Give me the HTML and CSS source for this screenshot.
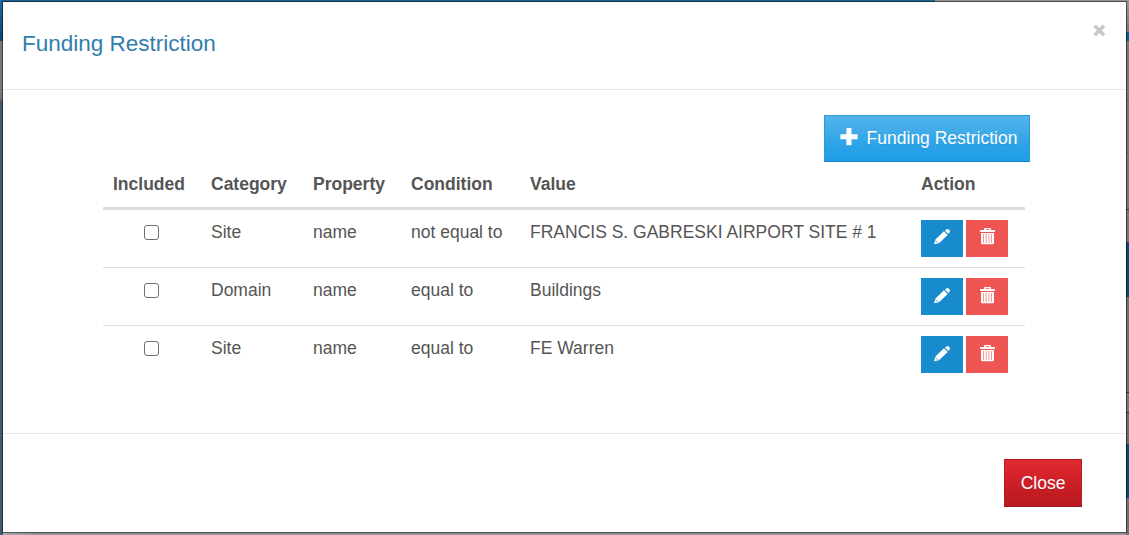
FILE: index.html
```
<!DOCTYPE html>
<html lang="en">
<head>
<meta charset="utf-8">
<title>Funding Restriction</title>
<link rel="stylesheet" href="styles.css">
</head>
<body>
<svg class="symbols" width="0" height="0">
  <symbol id="pencil" viewBox="0 0 18 18"><path fill="#fff" d="M1 16.2 2.4 11.5 10.9 3.3 14.7 7 6 15.2zM11.9 2.7 13.4 1.5Q14.6 .6 15.7 1.6L16.7 2.6Q17.4 3.5 16.6 4.5L15.5 6z"/><path d="M2.6 12.4 5.2 15" stroke="#188bcd" stroke-width=".7"/></symbol>
  <symbol id="trash" viewBox="0 0 15 17"><path fill="#fff" fill-rule="evenodd" d="M4 2V1Q4 0 5 0H10Q11 0 11 1V2H14Q15 2 15 3V4H0V3Q0 2 1 2zM5.7 1.2V2H9.3V1.2zM1 5H14V15Q14 16.3 12.7 16.3H2.3Q1 16.3 1 15z"/><path d="M3.5 6V15M6.2 6V15M8.9 6V15M11.5 6V15" stroke="#ef5552" stroke-opacity=".75" stroke-width=".8"/></symbol>
</svg>
<div class="backdrop">
  <div class="edge-left"><i class="blue"></i><i class="gray"></i><i class="slate"></i></div>
  <div class="edge-middle"><i class="top"></i><i class="bottom"></i></div>
  <div class="edge-right"><i class="g1"></i><i class="b1"></i><i class="g2"></i><i class="b2"></i><i class="g3"></i><i class="b3"></i><i class="g4"></i></div>
</div>
<main class="modal">
  <header class="modal-header">
    <h4 class="title">Funding Restriction</h4>
    <button class="dismiss" aria-label="Close"><svg width="13" height="13" viewBox="0 0 13 13"><path d="M1.6 1.8 11 11.2M11 1.8 1.6 11.2" stroke="#c8c8c8" stroke-width="3.7"/></svg></button>
  </header>
  <section class="modal-body">
    <div class="toolbar">
      <button class="btn btn-add"><svg class="plus" width="18" height="18" viewBox="0 0 18 18"><path fill="#fff" d="M7 0H11Q11.5 0 11.5 .5V6.2H17Q17.6 6.2 17.6 6.8V10.8Q17.6 11.3 17 11.3H11.5V16.6Q11.5 17.2 11 17.2H7Q6.4 17.2 6.4 16.6V11.3H1Q.4 11.3 .4 10.8V6.8Q.4 6.2 1 6.2H6.4V.5Q6.4 0 7 0z"/></svg><span>Funding Restriction</span></button>
    </div>
    <table class="grid">
      <colgroup><col class="c1"><col class="c2"><col class="c3"><col class="c4"><col class="c5"><col class="c6"></colgroup>
      <thead><tr><th>Included</th><th>Category</th><th>Property</th><th>Condition</th><th>Value</th><th>Action</th></tr></thead>
      <tbody>
        <tr><td><span class="check"></span></td><td>Site</td><td>name</td><td>not equal to</td><td>FRANCIS S. GABRESKI AIRPORT SITE # 1</td><td><div class="actions"><button class="act edit"><svg width="18" height="18"><use href="#pencil"/></svg></button><button class="act del"><svg width="15" height="17"><use href="#trash"/></svg></button></div></td></tr>
        <tr><td><span class="check"></span></td><td>Domain</td><td>name</td><td>equal to</td><td>Buildings</td><td><div class="actions"><button class="act edit"><svg width="18" height="18"><use href="#pencil"/></svg></button><button class="act del"><svg width="15" height="17"><use href="#trash"/></svg></button></div></td></tr>
        <tr><td><span class="check"></span></td><td>Site</td><td>name</td><td>equal to</td><td>FE Warren</td><td><div class="actions"><button class="act edit"><svg width="18" height="18"><use href="#pencil"/></svg></button><button class="act del"><svg width="15" height="17"><use href="#trash"/></svg></button></div></td></tr>
      </tbody>
    </table>
  </section>
  <footer class="modal-footer"><button class="btn btn-close">Close</button></footer>
</main>
</body>
</html>
```
FILE: styles.css
```
* { box-sizing: border-box; }
html, body { height: 100%; }
body { margin: 0; overflow: hidden; font: 17.5px/25px "Liberation Sans", Arial, sans-serif; color: #555; background: #929292; }
.symbols { position: absolute; }
button { font: inherit; border: 0; padding: 0; margin: 0; }
svg { display: block; }

/* Dimmed page behind the dialog */
.backdrop { position: absolute; inset: 0; display: flex; }
.backdrop i { display: block; }
.edge-left { width: 3px; display: flex; flex-direction: column; }
.edge-left .blue { height: 41px; background: linear-gradient(#216c9e, #0d456b); }
.edge-left .gray { height: 60px; background: #777; border-bottom: 2px solid #666; }
.edge-left .slate { flex: 1; background: #3f5a70; }
.edge-middle { flex: 1; display: flex; flex-direction: column; justify-content: space-between; }
.edge-middle .top { height: 3px; background: linear-gradient(90deg, #1c6490 932px, #929292 932px); }
.edge-middle .bottom { height: 3px; background: linear-gradient(90deg, #aaa, #929292 30px); }
.edge-right { width: 3px; display: flex; flex-direction: column; }
.edge-right .g1 { height: 32px; background: linear-gradient(#999, #777); }
.edge-right .b1 { height: 9px; background: #065c91; }
.edge-right .g2 { height: 201px; background: linear-gradient(#777 59px, #606060 59px 60px, #777 60px 111px, #606060 111px 112px, #777 112px 168px, #333 168px 169px, #777 169px); }
.edge-right .b2 { height: 55px; background: #074a72; }
.edge-right .g3 { height: 147px; background: linear-gradient(#707070 95px, #333 95px 96px, #777 96px 115px, #333 115px 116px, #6c6c6c 116px); }
.edge-right .b3 { height: 54px; background: #074a72; }
.edge-right .g4 { flex: 1; background: #707070; }

/* Dialog */
.modal { position: relative; margin: 1px 2px 2px; height: 532px; background: #fff; border: 1px solid rgba(0, 0, 0, .48); background-clip: padding-box; display: flex; flex-direction: column; }
.modal-header { height: 88px; margin-right: 1px; border-bottom: 1px solid #e5e5e5; display: flex; justify-content: space-between; padding: 22px 19px 0 19px; }
.title { margin: 0; padding-top: 4px; font-size: 22.5px; line-height: 32px; font-weight: 400; color: #317eac; }
.dismiss { width: 13px; height: 13px; background: none; }
.modal-body { height: 343px; padding: 25px 96px 0 100px; }
.toolbar { display: flex; justify-content: flex-end; }
.btn { color: #fff; display: flex; align-items: center; justify-content: center; text-shadow: 0 1px 0 rgba(0, 0, 0, .1); }
.btn-add { width: 206px; height: 47px; gap: 9px; padding-left: 3px; border: 1px solid #2b9bdd; border-bottom-color: #178acc; background: linear-gradient(#54b4eb, #2fa4e7 60%, #1d9ce5); }
.plus { margin-bottom: 3px; }
.grid { width: 922px; table-layout: fixed; border-collapse: separate; border-spacing: 0; }
.c1 { width: 98px; } .c2 { width: 102px; } .c3 { width: 98px; } .c4 { width: 119px; } .c5 { width: 391px; } .c6 { width: 114px; }
.grid th { height: 48px; padding: 10px 0 10px 10px; text-align: left; font-weight: 700; border-bottom: 3px solid #ddd; white-space: nowrap; }
.grid td { height: 58px; padding: 10px 0 10px 10px; vertical-align: top; border-bottom: 1px solid #ddd; white-space: nowrap; }
.grid tr:last-child td { border-bottom: 0; }
.check { display: block; width: 15px; height: 15px; margin: 5px 0 0 31px; border: 1px solid #6f6f6f; border-radius: 3px; background: #fff; }
.actions { display: flex; gap: 3px; }
.act { width: 42px; height: 37px; display: flex; justify-content: center; padding-top: 8px; }
.grid tr + tr .act { padding-top: 9px; }
.edit { background: #188bcd; }
.del { background: #ef5552; }
.modal-footer { flex: 1; margin-right: 1px; border-top: 1px solid #e5e5e5; display: flex; justify-content: flex-end; padding: 25px 43px 0 0; }
.btn-close { width: 78px; height: 48px; border: 1px solid #b81c22; border-bottom-color: #9c181d; background: linear-gradient(#e12b31, #cd1f26 50%, #b5191f); }
```
